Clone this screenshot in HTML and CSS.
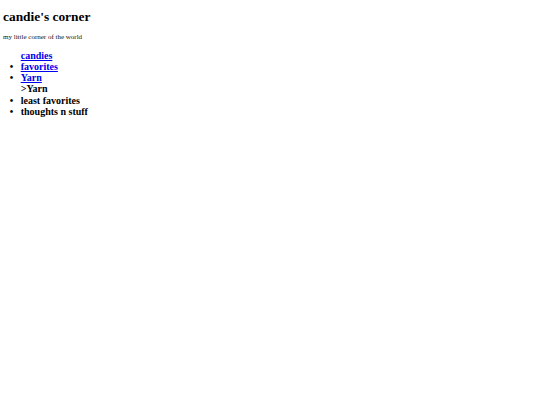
FILE: index.html
```html
<!DOCTYPE html>
<html>
<head>
<meta charset="utf-8">
<title>candie's corner</title>
<link rel="stylesheet" href="styles.css">
</head>
<body>
<div class="page">
  <h1 class="title">candie's corner</h1>
  <p class="tagline">my little corner of the world</p>
  <ul class="nav">
    <li class="nav-item plain"><a href="#">candies</a></li>
    <li class="nav-item"><a href="#">favorites</a></li>
    <li class="nav-item"><a href="#">Yarn</a></li>
    <li class="nav-item plain">&gt;Yarn</li>
    <li class="nav-item">least favorites</li>
    <li class="nav-item">thoughts n stuff</li>
  </ul>
</div>
</body>
</html>
```

FILE: styles.css
```css
html, body {
  margin: 0;
  padding: 0;
  background: #ffffff;
}

.page {
  padding: 8.5px 3px 0 3px;
  font-family: "Liberation Serif", "Times New Roman", serif;
  color: #000000;
}

.title {
  margin: 0;
  font-size: 13.4px;
  line-height: 16px;
  font-weight: bold;
}

.tagline {
  margin: 8.1px 0 0 0;
  font-size: 7px;
  line-height: 8px;
  color: #111111;
}

.nav {
  margin: 9.4px 0 0 0;
  padding: 0 0 0 17.7px;
  list-style: disc outside;
}

.nav-item {
  font-size: 10px;
  line-height: 11.15px;
  font-weight: bold;
}

.nav-item::marker {
  content: "\2022\00a0\00a0\00a0";
  white-space: pre;
}

.nav-item.plain {
  list-style: none;
}

.nav-item.plain::marker {
  content: "";
}

.nav-item a {
  color: #0000ee;
  text-decoration: underline;
}
```
